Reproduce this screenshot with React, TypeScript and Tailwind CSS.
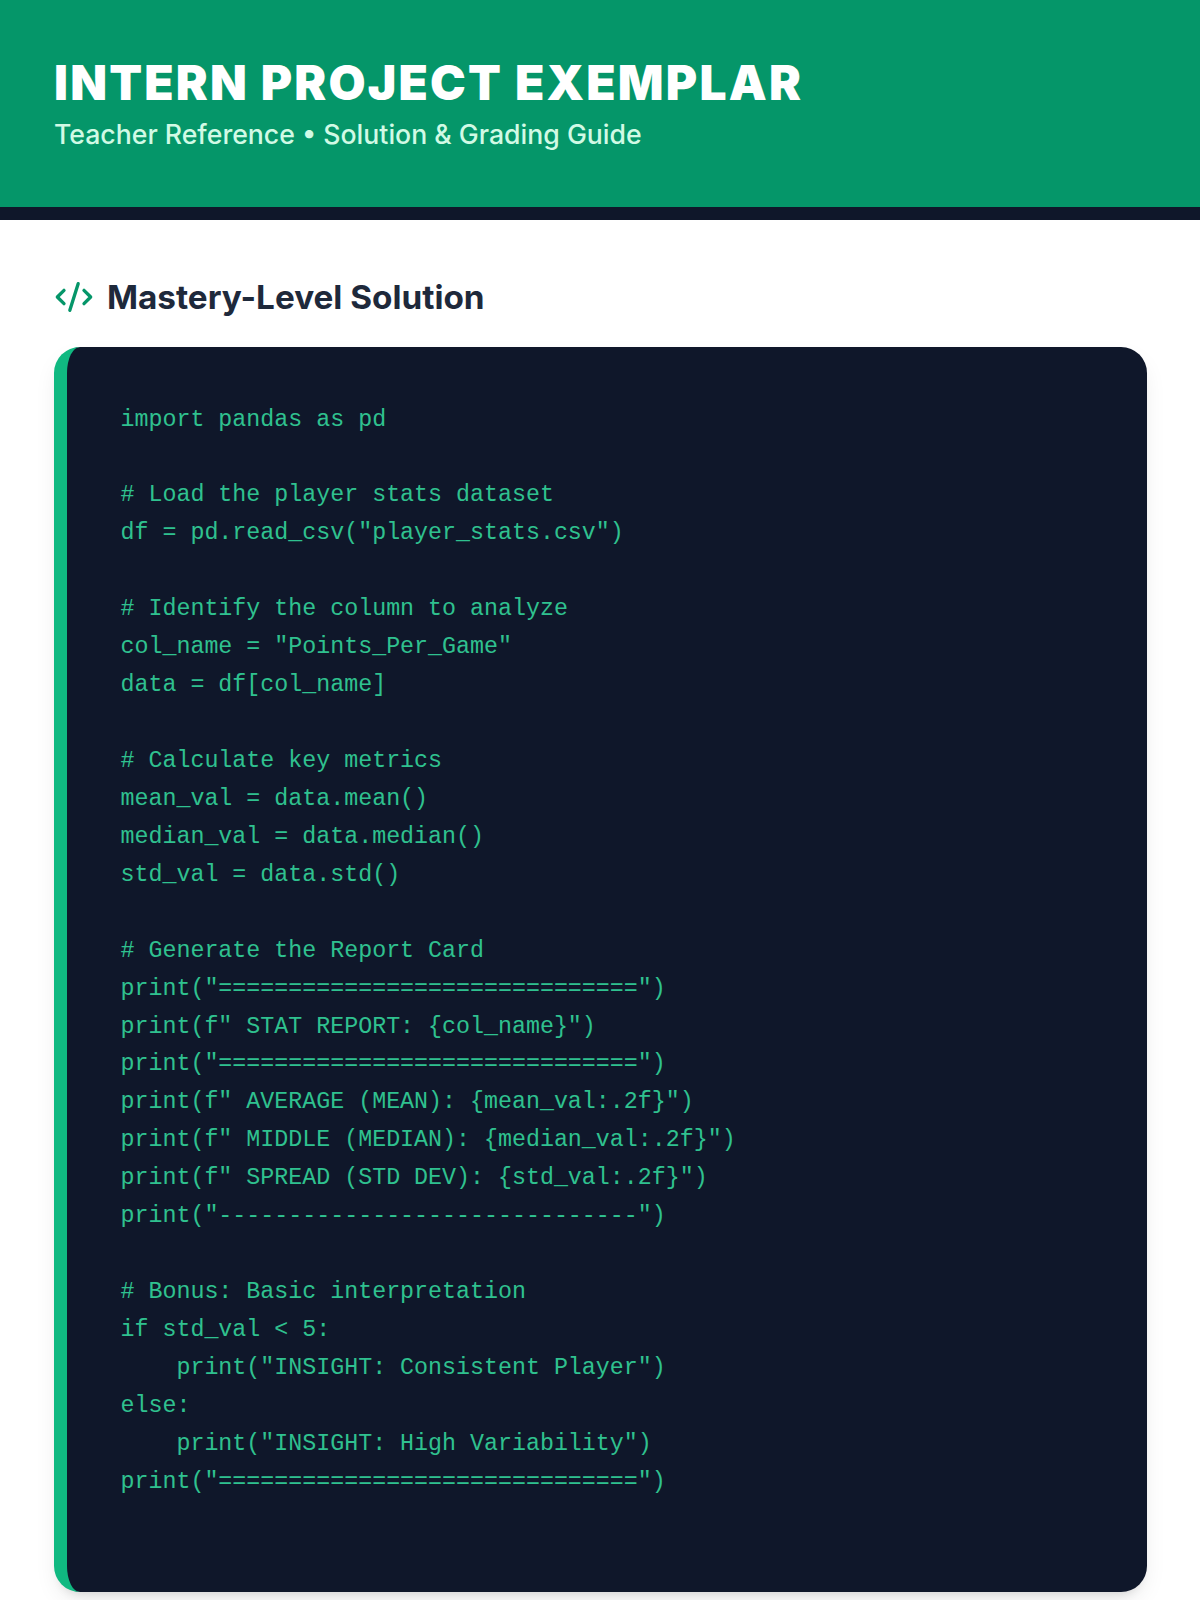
const code = `import pandas as pd

# Load the player stats dataset
df = pd.read_csv("player_stats.csv")

# Identify the column to analyze
col_name = "Points_Per_Game"
data = df[col_name]

# Calculate key metrics
mean_val = data.mean()
median_val = data.median()
std_val = data.std()

# Generate the Report Card
print("==============================")
print(f" STAT REPORT: {col_name}")
print("==============================")
print(f" AVERAGE (MEAN): {mean_val:.2f}")
print(f" MIDDLE (MEDIAN): {median_val:.2f}")
print(f" SPREAD (STD DEV): {std_val:.2f}")
print("------------------------------")

# Bonus: Basic interpretation
if std_val < 5:
    print("INSIGHT: Consistent Player")
else:
    print("INSIGHT: High Variability")
print("==============================")`;

export default function App() {
  return (
    <div className="h-[1600px] overflow-hidden bg-white font-['Inter',sans-serif]">
      <header className="h-[220px] border-b-[13px] border-[#0f172a] bg-[#059669] px-[54px] pt-[54px]">
        <h1 className="text-[47.88px] leading-[58px] font-black tracking-[2.2px] text-white">INTERN PROJECT EXEMPLAR</h1>
        <p className="mt-[6px] text-[26.65px] leading-[32px] font-medium text-[#d1fae5]">Teacher Reference • Solution &amp; Grading Guide</p>
      </header>
      <main className="px-[54px] pt-[54px]">
        <div className="flex h-[46px] items-center gap-[13px]">
          <svg width="40" height="40" viewBox="0 0 24 24" fill="none" stroke="#059669" strokeWidth="2" strokeLinecap="round" strokeLinejoin="round">
            <path d="m18 16 4-4-4-4" />
            <path d="m6 8-4 4 4 4" />
            <path d="m14.5 4-5 16" />
          </svg>
          <h2 className="text-[33.3px] leading-[46px] font-bold text-[#1e293b]">Mastery-Level Solution</h2>
        </div>
        <div className="mt-[27px] h-[1245px] w-[1093px] rounded-[26px] border-l-[13px] border-[#10b981] bg-[#0f172a] pt-[54.5px] pl-[53.5px] shadow-[0_10px_25px_-5px_rgba(0,0,0,0.1),0_8px_10px_-6px_rgba(0,0,0,0.1)]">
          <pre className="font-['Liberation_Mono',monospace] text-[23.3px] leading-[37.93px] text-[#2fc18f]">{code}</pre>
        </div>
      </main>
    </div>
  );
}
